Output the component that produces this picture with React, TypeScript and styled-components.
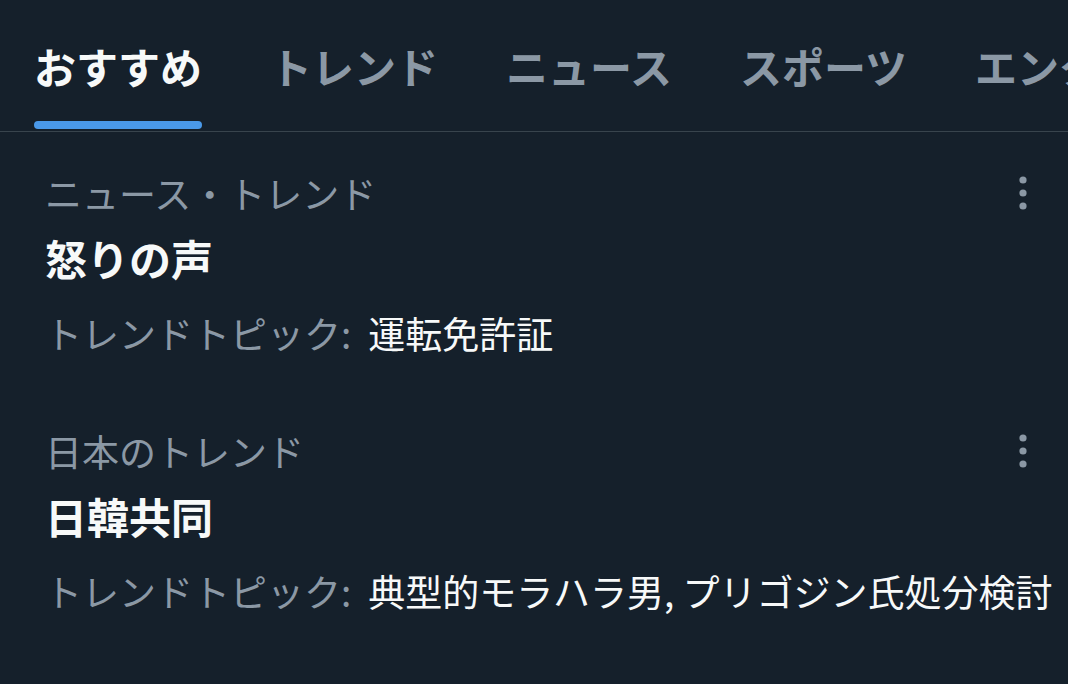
import React from "react";
import styled, { createGlobalStyle } from "styled-components";

const GlobalStyle = createGlobalStyle`
  html, body {
    margin: 0;
    padding: 0;
    background: #15202b;
  }
  body {
    font-family: "Noto Sans CJK JP", "Noto Sans", sans-serif;
    color: #f7f9f9;
    overflow: hidden;
  }
`;

const Page = styled.div`
  width: 1068px;
  height: 684px;
  background: #15202b;
  overflow: hidden;
`;

const TabBar = styled.nav`
  display: flex;
  height: 131px;
  border-bottom: 1px solid #38444d;
  overflow: hidden;
`;

const Tab = styled.div`
  flex-shrink: 0;
  display: flex;
  flex-direction: column;
  padding: 9px 34px 0;
`;

const TabLabel = styled.div<{ $active?: boolean }>`
  flex: 1;
  display: flex;
  align-items: center;
  font-size: 42px;
  font-weight: 700;
  white-space: nowrap;
  color: ${(p) => (p.$active ? "#f7f9f9" : "#8b98a5")};
`;

const Indicator = styled.div<{ $active?: boolean }>`
  height: 8px;
  margin: 0 0 2px;
  border-radius: 4px;
  background: ${(p) => (p.$active ? "#4a99e9" : "transparent")};
`;

const TrendList = styled.div`
  display: flex;
  flex-direction: column;
`;

const TrendRow = styled.div`
  display: grid;
  grid-template-columns: 1fr auto;
  padding: 36px 25px 22px 45px;
`;

const TrendBody = styled.div`
  display: flex;
  flex-direction: column;
  min-width: 0;
`;

const Context = styled.div`
  font-size: 37px;
  line-height: 50px;
  color: #8b98a5;
  white-space: nowrap;
`;

const Title = styled.div`
  font-size: 42px;
  font-weight: 700;
  line-height: 80px;
  color: #f7f9f9;
  white-space: nowrap;
`;

const Topics = styled.div`
  font-size: 37px;
  line-height: 70px;
  color: #f7f9f9;
  white-space: nowrap;
`;

const TopicsLabel = styled.span`
  color: #8b98a5;
  margin-right: 17px;
`;

const MoreButton = styled.button`
  align-self: start;
  width: 40px;
  height: 50px;
  padding: 0;
  border: none;
  background: none;
  display: flex;
  align-items: center;
  justify-content: center;
`;

const MoreIcon = () => (
  <svg width="8" height="34" viewBox="0 0 8 34">
    <circle cx="4" cy="4" r="3.6" fill="#8b98a5" />
    <circle cx="4" cy="17" r="3.6" fill="#8b98a5" />
    <circle cx="4" cy="30" r="3.6" fill="#8b98a5" />
  </svg>
);

const tabs = ["おすすめ", "トレンド", "ニュース", "スポーツ", "エンターテイメント"];

const trends = [
  { context: "ニュース・トレンド", title: "怒りの声", topics: "運転免許証" },
  {
    context: "日本のトレンド",
    title: "日韓共同",
    topics: "典型的モラハラ男, プリゴジン氏処分検討",
  },
];

export default function App() {
  return (
    <Page>
      <GlobalStyle />
      <TabBar>
        {tabs.map((t, i) => (
          <Tab key={t}>
            <TabLabel $active={i === 0}>{t}</TabLabel>
            <Indicator $active={i === 0} />
          </Tab>
        ))}
      </TabBar>
      <TrendList>
        {trends.map((tr) => (
          <TrendRow key={tr.title}>
            <TrendBody>
              <Context>{tr.context}</Context>
              <Title>{tr.title}</Title>
              <Topics>
                <TopicsLabel>トレンドトピック:</TopicsLabel>
                {tr.topics}
              </Topics>
            </TrendBody>
            <MoreButton aria-label="その他">
              <MoreIcon />
            </MoreButton>
          </TrendRow>
        ))}
      </TrendList>
    </Page>
  );
}
